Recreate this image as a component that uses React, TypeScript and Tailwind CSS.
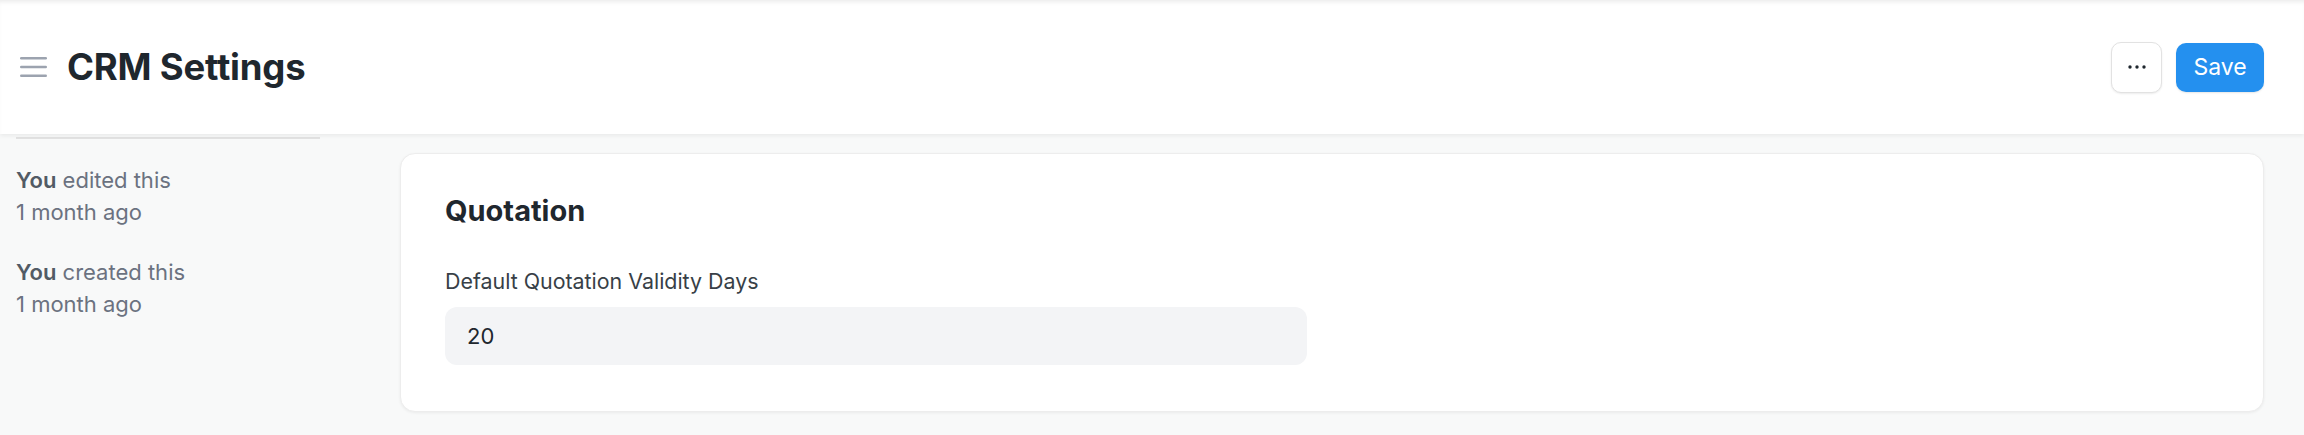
import React from "react";

export default function App() {
  return (
    <div className="w-[2304px] h-[435px] overflow-hidden bg-[#f8f9f9] flex flex-col" style={{ fontFamily: "Inter, 'Noto Sans', sans-serif" }}>
      <header className="h-[134px] shrink-0 bg-white flex items-center justify-between pl-5 pr-10 shadow-[0_2px_4px_rgba(0,0,0,0.06),inset_0_4px_4px_-2px_rgba(0,0,0,0.08)] relative z-10">
        <div className="flex items-center gap-[20px]">
          <svg width="27" height="20" viewBox="0 0 27 20" className="text-[#9ca3af]">
            <rect x="0" y="0" width="27" height="2.6" rx="1.3" fill="currentColor" />
            <rect x="0" y="8.7" width="27" height="2.6" rx="1.3" fill="currentColor" />
            <rect x="0" y="17.4" width="27" height="2.6" rx="1.3" fill="currentColor" />
          </svg>
          <h1 className="text-[36.5px] font-bold text-[#1f272e] tracking-[-0.2px] leading-[44px]">CRM Settings</h1>
        </div>
        <div className="flex items-center gap-[14px]">
          <button className="w-[51px] h-[51px] rounded-[10px] border border-[#e2e2e2] bg-white shadow-[0_1px_2px_rgba(0,0,0,0.08)] flex items-center justify-center">
            <svg width="18" height="4" viewBox="0 0 18 4">
              <circle cx="2" cy="2" r="1.7" fill="#1f272e" />
              <circle cx="9" cy="2" r="1.7" fill="#1f272e" />
              <circle cx="16" cy="2" r="1.7" fill="#1f272e" />
            </svg>
          </button>
          <button className="w-[88px] h-[49px] rounded-[10px] bg-[#2490ef] text-white text-[23px] shadow-[0_1px_2px_rgba(0,0,0,0.1)]">Save</button>
        </div>
      </header>
      <div className="flex flex-1 min-h-0">
        <aside className="w-[336px] shrink-0 px-4">
          <div className="h-[2px] bg-[#e2e2e2] mt-[3px]" />
          <div className="mt-[25px] text-[22px] leading-[32px] text-[#6b7280]">
            <div><span className="font-semibold text-[#525b65]">You</span> edited this</div>
            <div>1 month ago</div>
            <div className="mt-[28px]"><span className="font-semibold text-[#525b65]">You</span> created this</div>
            <div>1 month ago</div>
          </div>
        </aside>
        <main className="flex-1 pl-16 pr-10 pt-[19px]">
          <div className="h-[259px] bg-white rounded-[15px] border border-[#ededed] shadow-[0_1px_3px_rgba(0,0,0,0.06)] px-[44px] pt-[38px]">
            <h2 className="text-[29px] font-bold text-[#1f272e] leading-[38px]">Quotation</h2>
            <div className="mt-[37px] text-[21.4px] text-[#383f47] leading-[28px]">Default Quotation Validity Days</div>
            <div className="mt-[12px] w-[862px] h-[58px] rounded-[12px] bg-[#f3f4f6] flex items-center px-[22px] text-[22px] text-[#1f272e]">20</div>
          </div>
        </main>
      </div>
    </div>
  );
}
